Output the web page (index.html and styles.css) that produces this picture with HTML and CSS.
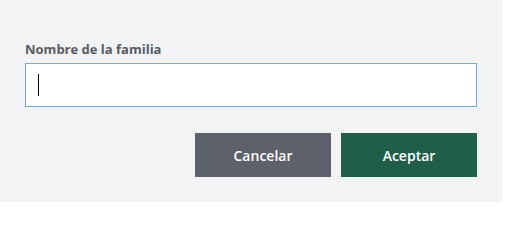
FILE: index.html
```html
<!DOCTYPE html>
<html lang="es">
<head>
<meta charset="utf-8">
<link rel="stylesheet" href="styles.css">
</head>
<body>
<div class="panel">
  <label class="label" for="fam">Nombre de la familia</label>
  <div class="input"><span class="caret"></span></div>
  <div class="actions">
    <button class="btn cancel">Cancelar</button>
    <button class="btn accept">Aceptar</button>
  </div>
</div>
</body>
</html>
```
FILE: styles.css
```css
html, body { margin: 0; padding: 0; background: #ffffff; }
body { font-family: "Open Sans", "Noto Sans", sans-serif; }
.panel {
  width: 502px;
  height: 202px;
  box-sizing: border-box;
  background: #f2f3f5;
  padding: 40px 25px 0 25px;
  display: flex;
  flex-direction: column;
}
.label {
  font-size: 13px;
  font-weight: 700;
  color: #575b64;
  line-height: 18px;
  height: 18px;
}
.input {
  margin-top: 5px;
  height: 44px;
  box-sizing: border-box;
  background: #ffffff;
  border: 1px solid #72a9e3;
  display: flex;
  align-items: center;
  padding-left: 12px;
}
.caret {
  width: 1px;
  height: 22px;
  background: #000;
}
.actions {
  margin-top: 26px;
  display: flex;
  justify-content: flex-end;
  gap: 10px;
}
.btn {
  width: 136px;
  height: 44px;
  border: none;
  color: #ffffff;
  font-family: "Open Sans", "Noto Sans", sans-serif;
  font-size: 14px;
  font-weight: 600;
  padding: 0;
}
.cancel { background: #5c616b; }
.accept { background: #1f5e48; }
```
